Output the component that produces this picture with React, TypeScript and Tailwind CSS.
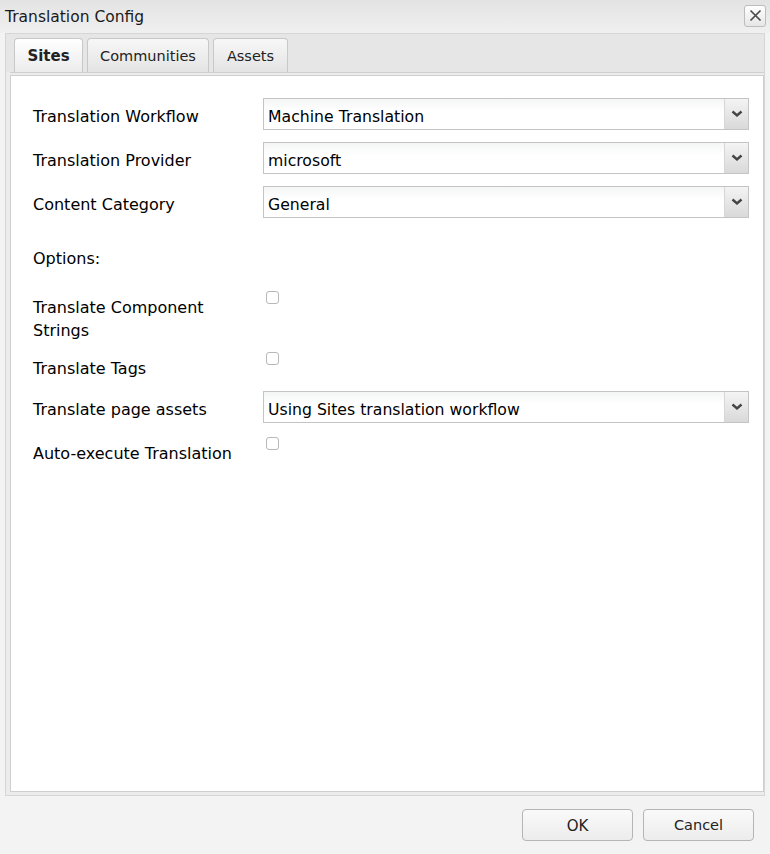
import React from "react";

const font = { fontFamily: '"DejaVu Sans", Verdana, sans-serif' };

function Select({ value }: { value: string }) {
  return (
    <div className="flex h-[32px] w-[486px] border border-[#c4c4c4] bg-gradient-to-b from-[#f4f5f5] to-white to-40%">
      <div className="flex-1 pl-[4px] pt-[9px] text-[15.7px] leading-[18px] text-black">{value}</div>
      <div className="w-[24px] flex items-center justify-center border-l border-[#d6d6d6] bg-gradient-to-b from-[#f4f4f4] to-[#d9d9d9]">
        <svg width="12" height="8" viewBox="0 0 12 8">
          <path d="M1.5 1.5 L6 5.5 L10.5 1.5" fill="none" stroke="#444" strokeWidth="2.4" />
        </svg>
      </div>
    </div>
  );
}

function Check() {
  return <div className="-mt-[5px] ml-[3px] w-[13px] h-[13px] rounded-[3px] border border-[#b8b8b8] bg-white" />;
}

function Row({ label, children, className = "", labelClass = "" }: { label: React.ReactNode; children: React.ReactNode; className?: string; labelClass?: string }) {
  return (
    <div className={"flex items-start " + className}>
      <div className={"w-[230px] text-[16px] leading-[23px] text-black " + labelClass}>{label}</div>
      <div>{children}</div>
    </div>
  );
}

export default function App() {
  return (
    <div className="w-[770px] h-[854px] bg-[#f3f3f3] flex flex-col overflow-hidden" style={font}>
      {/* title */}
      <div className="h-[33px] flex items-center justify-between pl-[5px] pr-[4px] bg-gradient-to-b from-[#e3e3e3] to-[#f0f0f0]">
        <span className="text-[15.5px] text-[#1a1a1a] mt-[2px]">Translation Config</span>
        <div className="w-[22px] h-[22px] -mt-[2px] rounded-[3px] border border-[#bdbdbd] bg-gradient-to-b from-white to-[#e6e6e6] flex items-center justify-center">
          <svg width="13" height="13" viewBox="0 0 13 13">
            <path d="M1.5 1.5 L11.5 11.5 M11.5 1.5 L1.5 11.5" stroke="#4a4a4a" strokeWidth="1.7" />
          </svg>
        </div>
      </div>

      {/* panel */}
      <div className="mx-[5px] flex-1 flex flex-col border border-[#d6d6d6] bg-[#ececec]">
        <div className="h-[38px] flex items-end gap-[4px] pl-[8px] bg-[#e6e6e6]">
          <div className="h-[34px] w-[69px] flex items-center justify-center pt-[2px] rounded-t-[4px] border border-b-0 border-[#c8c8c8] bg-gradient-to-b from-white to-[#ececec] text-[15px] font-bold text-[#222]">
            Sites
          </div>
          <div className="h-[34px] w-[122px] flex items-center justify-center pt-[2px] rounded-t-[4px] border border-b-0 border-[#c8c8c8] bg-gradient-to-b from-[#f7f7f7] to-[#e4e4e4] text-[14.5px] text-[#222]">
            Communities
          </div>
          <div className="h-[34px] w-[75px] flex items-center justify-center pt-[2px] rounded-t-[4px] border border-b-0 border-[#c8c8c8] bg-gradient-to-b from-[#f7f7f7] to-[#e4e4e4] text-[14.5px] text-[#222]">
            Assets
          </div>
        </div>
        <div className="h-[4px] bg-[#ececec] border-y border-[#cfcfcf] ml-[4px]" />
        <div className="flex-1 ml-[4px] mb-[3px] bg-white border border-t-0 border-[#cfcfcf] pl-[22px] pt-[22px] flex flex-col">
          <Row label="Translation Workflow" labelClass="mt-[7px]">
            <Select value="Machine Translation" />
          </Row>
          <Row label="Translation Provider" labelClass="mt-[7px]" className="mt-[12px]">
            <Select value="microsoft" />
          </Row>
          <Row label="Content Category" labelClass="mt-[7px]" className="mt-[12px]">
            <Select value="General" />
          </Row>
          <div className="mt-[29px] text-[16px] leading-[23px] text-black">Options:</div>
          <Row label={<>Translate Component<br />Strings</>} className="mt-[26px]">
            <Check />
          </Row>
          <Row label="Translate Tags" className="mt-[15px]">
            <Check />
          </Row>
          <Row label="Translate page assets" labelClass="mt-[7px]" className="mt-[11px]">
            <Select value="Using Sites translation workflow" />
          </Row>
          <Row label="Auto-execute Translation" className="mt-[19px]">
            <Check />
          </Row>
        </div>
      </div>

      {/* footer */}
      <div className="h-[58px] flex items-center justify-end gap-[10px] pr-[16px] pb-[1px]">
        <button className="w-[111px] h-[32px] pt-[3px] rounded-[4px] border border-[#b5b5b5] bg-gradient-to-b from-[#fafafa] to-[#ececec] text-[15px] text-[#222]">
          OK
        </button>
        <button className="w-[111px] h-[32px] pt-[3px] rounded-[4px] border border-[#b5b5b5] bg-gradient-to-b from-[#fafafa] to-[#ececec] text-[14.5px] text-[#222]">
          Cancel
        </button>
      </div>
    </div>
  );
}
